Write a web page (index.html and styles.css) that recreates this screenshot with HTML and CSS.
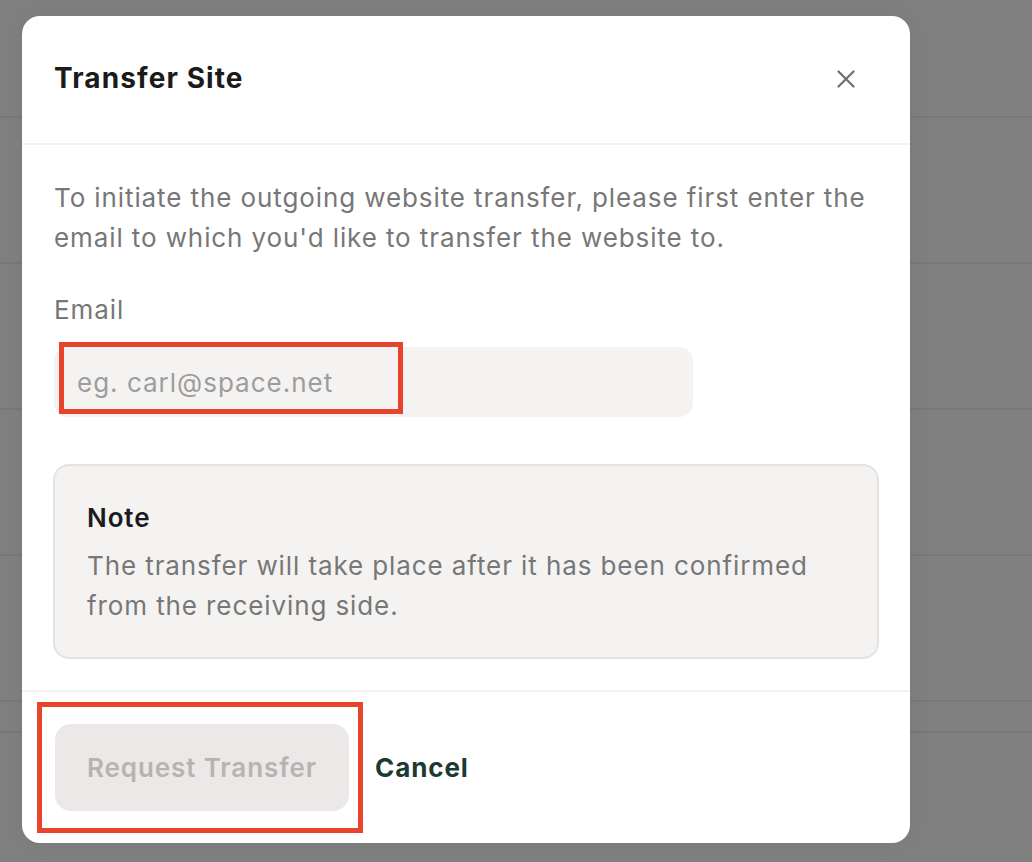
FILE: index.html
```html
<!DOCTYPE html>
<html lang="en">
<head>
    <meta charset="UTF-8">
    <meta name="viewport" content="width=device-width, initial-scale=1.0">
    <title>Transfer Site</title>
    <link rel="stylesheet" href="styles.css">
</head>
<body>
    <div class="backdrop">
        <div class="row first"></div>
        <div class="row"></div>
        <div class="row"></div>
        <div class="row"></div>
        <div class="row"></div>
        <div class="row thin"></div>
        <div class="row last"></div>
    </div>

    <div class="modal">
        <div class="modal-header">
            <h1>Transfer Site</h1>
            <button class="close" aria-label="Close">
                <svg width="18" height="18" viewBox="0 0 18 18">
                    <path d="M1.5 1.5 L16.5 16.5 M16.5 1.5 L1.5 16.5" stroke="#6f6f6f" stroke-width="2.2" stroke-linecap="round" fill="none"/>
                </svg>
            </button>
        </div>

        <div class="modal-body">
            <p class="intro">To initiate the outgoing website transfer, please first enter the email to which you'd like to transfer the website to.</p>

            <label class="label" for="email">Email</label>
            <input id="email" class="input" type="text" placeholder="eg. carl@space.net">

            <div class="note">
                <div class="note-title">Note</div>
                <div class="note-text">The transfer will take place after it has been confirmed from the receiving side.</div>
            </div>
        </div>

        <div class="modal-footer">
            <button class="button" disabled>Request Transfer</button>
            <a href="#" class="cancel">Cancel</a>
        </div>

        <div class="mark mark-input"></div>
        <div class="mark mark-button"></div>
    </div>
</body>
</html>
```

FILE: styles.css
```css
body {
    margin: 0;
    font-family: Inter, "Noto Sans", sans-serif;
    letter-spacing: 0.9px;
    background-color: #808080;
    height: 862px;
    overflow: hidden;
}
.backdrop {
    display: flex;
    flex-direction: column;
}
.row {
    height: 146px;
    border-bottom: 2px solid #787878;
    box-sizing: border-box;
}
.row.first {
    height: 118px;
}
.row.thin {
    height: 31px;
}
.row.last {
    height: 140px;
    border-bottom: none;
}
.modal {
    position: absolute;
    left: 22px;
    top: 16px;
    width: 888px;
    height: 827px;
    background-color: #fff;
    border-radius: 18px;
    box-shadow: 0 0 24px rgba(0, 0, 0, 0.06);
    display: flex;
    flex-direction: column;
}
.modal-header {
    height: 129px;
    padding: 0 55px 0 32px;
    display: flex;
    align-items: center;
    justify-content: space-between;
    border-bottom: 2px solid #f2f2f2;
    box-sizing: border-box;
}
.modal-header h1 {
    margin: 0 0 4px;
    font-size: 28px;
    font-weight: 700;
    letter-spacing: 1.1px;
    color: #1b1b1b;
}
.close {
    background: none;
    border: none;
    padding: 0;
    width: 18px;
    height: 18px;
    margin-bottom: 2px;
    cursor: pointer;
}
.modal-body {
    padding: 33px 31px 31px 32px;
    display: flex;
    flex-direction: column;
    align-items: flex-start;
}
.intro {
    margin: 0;
    font-size: 26px;
    line-height: 40px;
    color: #777;
    max-width: 826px;
}
.label {
    margin-top: 32px;
    font-size: 26px;
    line-height: 40px;
    color: #777;
}
.input {
    margin-top: 17px;
    width: 639px;
    height: 70px;
    box-sizing: border-box;
    border: none;
    border-radius: 14px;
    background-color: #f4f3f2;
    padding: 0 23px;
    font-family: inherit;
    font-size: 26px;
    letter-spacing: 1px;
    color: #333;
    outline: none;
}
.input::placeholder {
    color: #9d9d9d;
}
.note {
    margin-top: 47px;
    margin-left: -1px;
    width: 826px;
    box-sizing: border-box;
    background-color: #f4f3f2;
    border: 2px solid #e4e3e2;
    border-radius: 16px;
    padding: 32px 32px 31px;
}
.note-title {
    font-size: 26px;
    line-height: 40px;
    font-weight: 600;
    color: #1b1b1b;
}
.note-text {
    margin-top: 8px;
    font-size: 26px;
    line-height: 40px;
    color: #777;
}
.modal-footer {
    border-top: 2px solid #f2f2f2;
    flex: 1;
    padding: 0 33px;
    display: flex;
    align-items: center;
    gap: 26px;
}
.button {
    height: 87px;
    padding: 0 32px;
    border: none;
    border-radius: 16px;
    background-color: #ebe8e7;
    color: #b6b4b2;
    font-family: inherit;
    font-size: 26px;
    font-weight: 600;
    letter-spacing: 0.9px;
}
.cancel {
    font-size: 26px;
    font-weight: 700;
    color: #1c3a2f;
    text-decoration: none;
}
.mark {
    position: absolute;
    border: 5px solid #e8442b;
    box-sizing: border-box;
    pointer-events: none;
}
.mark-input {
    left: 37px;
    top: 326px;
    width: 344px;
    height: 72px;
}
.mark-button {
    left: 15px;
    top: 686px;
    width: 326px;
    height: 131px;
}
```
